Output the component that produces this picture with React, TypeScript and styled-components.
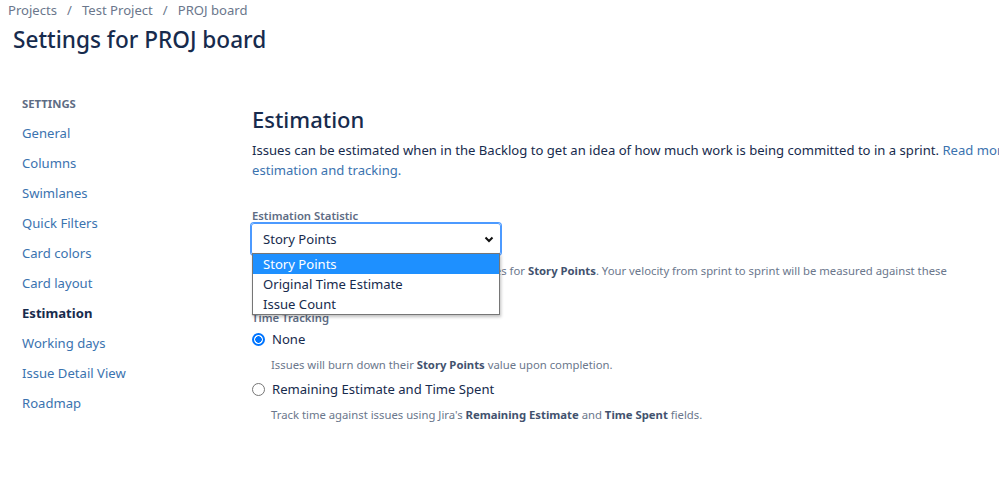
import React from 'react'
import styled, { createGlobalStyle } from 'styled-components'

const GlobalStyle = createGlobalStyle`
  html, body {
    margin: 0;
    padding: 0;
    background: #fff;
  }
  body {
    font-family: 'Noto Sans', 'Open Sans', sans-serif;
    color: #172b4d;
  }
`

const navItems = [
  'General',
  'Columns',
  'Swimlanes',
  'Quick Filters',
  'Card colors',
  'Card layout',
  'Estimation',
  'Working days',
  'Issue Detail View',
  'Roadmap',
]

const options = ['Story Points', 'Original Time Estimate', 'Issue Count']

export default function App() {
  return (
    <Page>
      <GlobalStyle />
      <Header>
        <Breadcrumbs>
          <Crumb>Projects</Crumb>
          <Sep>/</Sep>
          <Crumb>Test Project</Crumb>
          <Sep>/</Sep>
          <Crumb>PROJ board</Crumb>
        </Breadcrumbs>
        <Title>Settings for PROJ board</Title>
      </Header>
      <Body>
        <Sidebar>
          <SideHeading>SETTINGS</SideHeading>
          {navItems.map((item) => (
            <NavLink key={item} active={item === 'Estimation'}>
              {item}
            </NavLink>
          ))}
        </Sidebar>
        <Main>
          <Heading>Estimation</Heading>
          <Description>
            Issues can be estimated when in the Backlog to get an idea of how much work is being committed to in a
            sprint. <Link>Read more about estimation and tracking.</Link>
          </Description>
          <FieldLabel>Estimation Statistic</FieldLabel>
          <SelectWrap>
            <SelectBox>
              <span>Story Points</span>
              <svg width="12" height="12" viewBox="0 0 12 12">
                <path d="M2.5 4.5 L6 8 L9.5 4.5" fill="none" stroke="#111" strokeWidth="2" />
              </svg>
            </SelectBox>
            <Listbox>
              {options.map((o, i) => (
                <Option key={o} selected={i === 0}>
                  {o}
                </Option>
              ))}
            </Listbox>
          </SelectWrap>
          <Help>
            Estimates in the Backlog will be based on values for <b>Story Points</b>. Your velocity from sprint to
            sprint will be measured against these
          </Help>
          <TrackingLabel>Time Tracking</TrackingLabel>
          <RadioRow first>
            <Radio checked />
            <span>None</span>
          </RadioRow>
          <RadioHelp>
            Issues will burn down their <b>Story Points</b> value upon completion.
          </RadioHelp>
          <RadioRow>
            <Radio />
            <span>Remaining Estimate and Time Spent</span>
          </RadioRow>
          <RadioHelp>
            Track time against issues using Jira's <b>Remaining Estimate</b> and <b>Time Spent</b> fields.
          </RadioHelp>
        </Main>
      </Body>
    </Page>
  )
}

const Page = styled.div`
  width: 999px;
  height: 497px;
  overflow: hidden;
`
const Header = styled.header`
  padding-left: 8px;
`
const Breadcrumbs = styled.div`
  display: flex;
  gap: 8px;
  font-size: 13.1px;
  line-height: 20px;
  color: #6b778c;
`
const Crumb = styled.span``
const Sep = styled.span`
  padding: 0 2px;
`
const Title = styled.h1`
  margin: 5px 0 0 5px;
  font-size: 22.6px;
  line-height: 30px;
  font-weight: 500;
  color: #172b4d;
`
const Body = styled.div`
  display: grid;
  grid-template-columns: 252px 1fr;
  margin-top: 41px;
`
const Sidebar = styled.nav`
  display: flex;
  flex-direction: column;
  padding-left: 22px;
`
const SideHeading = styled.div`
  font-size: 11.3px;
  line-height: 16px;
  font-weight: 700;
  color: #5e6c84;
  margin-bottom: 6px;
`
const NavLink = styled.a<{ active?: boolean }>`
  font-size: 13.1px;
  line-height: 30px;
  color: ${({ active }) => (active ? '#172b4d' : '#3b73af')};
  font-weight: ${({ active }) => (active ? 700 : 400)};
`
const Main = styled.main`
  display: flex;
  flex-direction: column;
  align-items: flex-start;
  padding-top: 8px;
  white-space: nowrap;
`
const Heading = styled.h2`
  margin: 0;
  font-size: 22px;
  line-height: 30px;
  font-weight: 500;
  color: #172b4d;
`
const Description = styled.p`
  margin: 6px 0 0;
  width: 800px;
  white-space: normal;
  font-size: 13.1px;
  line-height: 20px;
  color: #172b4d;
`
const Link = styled.a`
  color: #3b73af;
`
const FieldLabel = styled.label`
  margin-top: 29px;
  font-size: 11.3px;
  line-height: 14px;
  font-weight: 600;
  color: #5e6c84;
`
const SelectWrap = styled.div`
  position: relative;
  margin-left: -1px;
`
const SelectBox = styled.div`
  box-sizing: border-box;
  width: 250px;
  height: 32px;
  display: flex;
  align-items: center;
  justify-content: space-between;
  padding: 0 5px 0 11px;
  border: 1px solid #4c9aff;
  box-shadow: 0 0 0 1px #4c9aff;
  border-radius: 3px;
  font-size: 13.1px;
  color: #172b4d;
`
const Listbox = styled.ul`
  position: absolute;
  top: 30px;
  left: 1px;
  width: 248px;
  box-sizing: border-box;
  margin: 0;
  padding: 0;
  list-style: none;
  background: #fff;
  border: 1px solid #767676;
  box-shadow: 1px 2px 3px rgba(0, 0, 0, 0.25);
  z-index: 2;
`
const Option = styled.li<{ selected?: boolean }>`
  height: 20px;
  line-height: 20px;
  padding-left: 10px;
  font-size: 13.1px;
  background: ${({ selected }) => (selected ? '#1e90ff' : '#fff')};
  color: ${({ selected }) => (selected ? '#fff' : '#172b4d')};
`
const Help = styled.p`
  margin: 8px 0 0;
  font-size: 11.3px;
  line-height: 16px;
  color: #6b778c;

  b {
    color: #42526e;
    font-weight: 700;
  }
`
const TrackingLabel = styled(FieldLabel)`
  margin-top: 32px;
`
const RadioRow = styled.div<{ first?: boolean }>`
  display: flex;
  align-items: center;
  gap: 7px;
  margin-top: ${({ first }) => (first ? '4px' : '6px')};
  font-size: 13.1px;
  line-height: 20px;
  color: #172b4d;
`
const Radio = styled.span<{ checked?: boolean }>`
  box-sizing: border-box;
  width: 13px;
  height: 13px;
  border-radius: 50%;
  border: ${({ checked }) => (checked ? '2px solid #0075ff' : '1px solid #767676')};
  background: ${({ checked }) => (checked ? 'radial-gradient(circle, #0075ff 0 3px, #fff 3.5px)' : '#fff')};
`
const RadioHelp = styled(Help)`
  margin: 8px 0 0 19px;
`
